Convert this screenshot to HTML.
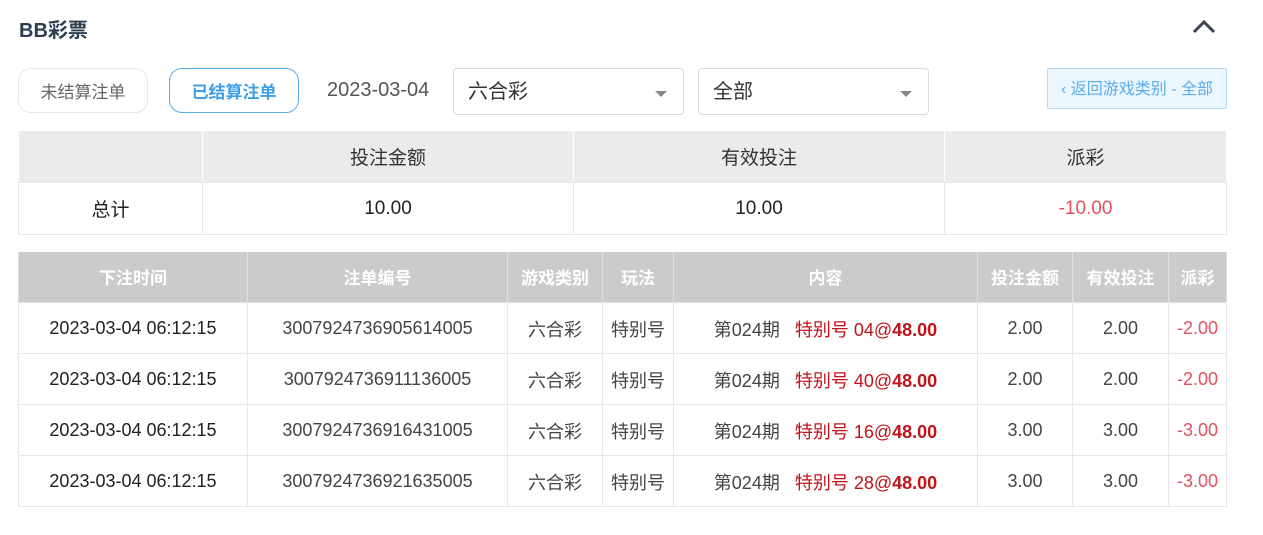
<!DOCTYPE html><html><head><meta charset="utf-8"><style>
*{box-sizing:border-box;margin:0;padding:0}
body{width:1263px;height:535px;background:#fff;font-family:"Liberation Sans","Noto Sans CJK SC",sans-serif;color:#333;position:relative;overflow:hidden}
.a{position:absolute}
.title{left:19px;top:14px;font-size:20px;font-weight:bold;color:#2c3e50}
.btn{top:68px;height:45px;width:130px;border-radius:13px;border:1px solid #e6e6e6;font-size:17px;display:flex;align-items:center;justify-content:center;color:#666}
.sel{top:68px;height:47px;width:231px;border:1px solid #dcdcdc;border-radius:4px;font-size:20px;color:#333;padding-left:14px;line-height:47px}
.sel:after{content:"";position:absolute;right:16px;top:22px;border-left:6px solid transparent;border-right:6px solid transparent;border-top:6px solid #888}
table{position:absolute;border-collapse:collapse;table-layout:fixed}
td,th{text-align:center;border:1px solid #e8e8e8}
.sum{left:18px;top:130px;width:1209px;font-size:19px}
.sum th{background:#ebebeb;font-weight:normal;height:52px;border-color:#fff #fff #e8e8e8 #fff}
.sum td{height:52px;color:#222}
.det{left:18px;top:252px;width:1209px;font-size:18px}
.det th{background:#cbcbcb;color:#fff;height:50px;border:1px solid #e0e0e0;border-top:none;font-size:17px}
.det td{height:51px;color:#444;padding-top:2px}
td.r{color:#e4505f}.dr{color:#c0131a}
</style></head><body>
<div class="a title">BB彩票</div>
<svg class="a" style="left:1192px;top:19px" width="24" height="16"><path d="M2 13 L12 3 L22 13" stroke="#3b4652" stroke-width="3" fill="none"/></svg>
<div class="a btn" style="left:18px">未结算注单</div>
<div class="a btn" style="left:169px;border-color:#5aaeea;color:#3c9fe8;font-weight:bold">已结算注单</div>
<div class="a" style="left:327px;top:79px;font-size:20px;color:#555">2023-03-04</div>
<div class="a sel" style="left:453px">六合彩</div>
<div class="a sel" style="left:698px">全部</div>
<div class="a" style="left:1047px;top:68px;width:180px;height:41px;background:#ecf6fe;border:1px solid #b6d9f4;border-radius:2px;color:#5aaeea;font-size:16px;line-height:41px;text-align:center">‹ 返回游戏类别 - 全部</div>
<table class="sum"><colgroup><col style="width:184px"><col style="width:371px"><col style="width:371px"><col></colgroup>
<tr><th></th><th>投注金额</th><th>有效投注</th><th>派彩</th></tr>
<tr><td>总计</td><td>10.00</td><td>10.00</td><td class="r">-10.00</td></tr></table>
<table class="det"><colgroup><col style="width:229px"><col style="width:260px"><col style="width:95px"><col style="width:71px"><col style="width:304px"><col style="width:95px"><col style="width:96px"><col></colgroup>
<tr><th>下注时间</th><th>注单编号</th><th>游戏类别</th><th>玩法</th><th>内容</th><th>投注金额</th><th>有效投注</th><th>派彩</th></tr>
<tr><td style="color:#222">2023-03-04 06:12:15</td><td>3007924736905614005</td><td>六合彩</td><td>特别号</td><td>第024期&nbsp;&nbsp; <span class="dr">特别号 04@<b>48.00</b></span></td><td>2.00</td><td>2.00</td><td class="r">-2.00</td></tr>
<tr><td style="color:#222">2023-03-04 06:12:15</td><td>3007924736911136005</td><td>六合彩</td><td>特别号</td><td>第024期&nbsp;&nbsp; <span class="dr">特别号 40@<b>48.00</b></span></td><td>2.00</td><td>2.00</td><td class="r">-2.00</td></tr>
<tr><td style="color:#222">2023-03-04 06:12:15</td><td>3007924736916431005</td><td>六合彩</td><td>特别号</td><td>第024期&nbsp;&nbsp; <span class="dr">特别号 16@<b>48.00</b></span></td><td>3.00</td><td>3.00</td><td class="r">-3.00</td></tr>
<tr><td style="color:#222">2023-03-04 06:12:15</td><td>3007924736921635005</td><td>六合彩</td><td>特别号</td><td>第024期&nbsp;&nbsp; <span class="dr">特别号 28@<b>48.00</b></span></td><td>3.00</td><td>3.00</td><td class="r">-3.00</td></tr>
</table>
</body></html>
